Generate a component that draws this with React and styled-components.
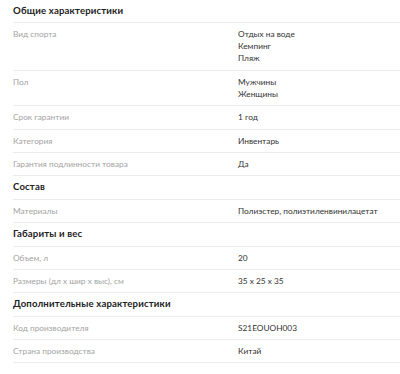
import React from "react";
import styled, { createGlobalStyle } from "styled-components";

const GlobalStyle = createGlobalStyle`
  body {
    margin: 0;
    background: #fff;
    font-family: Lato, "Open Sans", sans-serif;
  }
`;

const Wrap = styled.div`
  padding-left: 13px;
  width: 387px;
`;

const Heading = styled.div`
  font-size: 9.6px;
  font-weight: 700;
  color: #222;
  line-height: 12px;
  padding: 5px 0 5.4px;
  border-bottom: 1px solid #ececec;
  letter-spacing: 0.15px;
`;

const Row = styled.div`
  display: grid;
  grid-template-columns: 225px 1fr;
  padding: 5px 0 5.4px;
  border-bottom: 1px solid #ececec;
  font-size: 8.3px;
  line-height: 12px;
`;

const Label = styled.div`
  color: #a3a3a3;
`;

const Value = styled.div`
  color: #333;
  display: flex;
  flex-direction: column;
`;

const sections = [
  {
    title: "Общие характеристики",
    rows: [
      ["Вид спорта", ["Отдых на воде", "Кемпинг", "Пляж"]],
      ["Пол", ["Мужчины", "Женщины"]],
      ["Срок гарантии", ["1 год"]],
      ["Категория", ["Инвентарь"]],
      ["Гарантия подлинности товара", ["Да"]],
    ],
  },
  {
    title: "Состав",
    rows: [["Материалы", ["Полиэстер, полиэтиленвинилацетат"]]],
  },
  {
    title: "Габариты и вес",
    rows: [
      ["Объем, л", ["20"]],
      ["Размеры (дл х шир х выс), см", ["35 x 25 x 35"]],
    ],
  },
  {
    title: "Дополнительные характеристики",
    rows: [
      ["Код производителя", ["S21EOUOH003"]],
      ["Страна производства", ["Китай"]],
    ],
  },
];

export default function App() {
  return (
    <>
      <GlobalStyle />
      <Wrap>
        {sections.map((s) => (
          <React.Fragment key={s.title}>
            <Heading>{s.title}</Heading>
            {s.rows.map(([label, values]) => (
              <Row key={label}>
                <Label>{label}</Label>
                <Value>
                  {values.map((v) => (
                    <span key={v}>{v}</span>
                  ))}
                </Value>
              </Row>
            ))}
          </React.Fragment>
        ))}
      </Wrap>
    </>
  );
}
